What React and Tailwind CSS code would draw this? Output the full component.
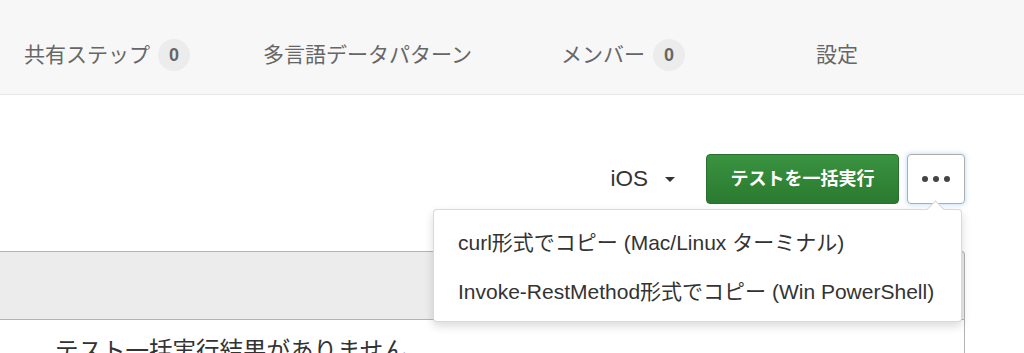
import React from "react";

function Badge({ n }) {
  return (
    <span className="ml-[8px] inline-flex h-[32px] w-[32px] items-center justify-center rounded-full bg-[#ececec] text-[18px] font-bold text-[#666]">
      {n}
    </span>
  );
}

export default function App() {
  return (
    <div className="h-[353px] w-[1024px] overflow-hidden bg-white font-['Liberation_Sans','Noto_Sans_CJK_JP',sans-serif]">
      <nav className="flex h-[95px] border-b border-[#e8e8e8] bg-[#f7f7f7] pl-[24px] pt-[39px] text-[21px] text-[#666]">
        <div className="flex h-[32px] w-[239px] items-center">
          共有ステップ
          <Badge n="0" />
        </div>
        <div className="flex h-[32px] w-[298px] items-center">多言語データパターン</div>
        <div className="flex h-[32px] w-[255px] items-center">
          メンバー
          <Badge n="0" />
        </div>
        <div className="flex h-[32px] items-center">設定</div>
      </nav>

      <div className="pr-[59px]">
        <div className="flex h-[109px] items-end justify-end">
          <div className="flex h-[50px] items-center">
            <div className="flex items-center text-[22.5px] text-[#333]">
              iOS
              <span className="ml-[17px] h-0 w-0 border-l-[5px] border-r-[5px] border-t-[5px] border-l-transparent border-r-transparent border-t-[#333]" />
            </div>
            <button className="ml-[31px] flex h-[50px] w-[193px] items-center justify-center rounded-[4px] border border-[#2a6f2d] bg-gradient-to-b from-[#3a9340] to-[#2a7a2f] text-[18px] font-bold text-white">
              テストを一括実行
            </button>
            <div className="relative ml-[8px]">
              <button className="flex h-[50px] w-[58px] items-center justify-center gap-[5px] rounded-[4px] border border-[#adadad] bg-white shadow-[0_0_4px_1px_rgba(102,175,233,0.35)]">
                <span className="h-[6px] w-[6px] rounded-full bg-[#444]" />
                <span className="h-[6px] w-[6px] rounded-full bg-[#444]" />
                <span className="h-[6px] w-[6px] rounded-full bg-[#444]" />
              </button>
              <div className="absolute right-[3px] top-[55px] z-10 w-[529px] rounded-[4px] border border-[rgba(0,0,0,0.15)] bg-white pb-[5px] pt-[8px] text-[21px] text-[#333] shadow-[0_4px_10px_rgba(0,0,0,0.15)]">
                <span className="absolute -top-[7px] right-[19px] h-[13px] w-[13px] rotate-45 border-l border-t border-[rgba(0,0,0,0.15)] bg-white" />
                <div className="flex h-[49px] items-center pl-[24px]">
                  curl形式でコピー (Mac/Linux ターミナル)
                </div>
                <div className="flex h-[49px] items-center pl-[24px]">
                  Invoke-RestMethod形式でコピー (Win PowerShell)
                </div>
              </div>
            </div>
          </div>
        </div>

        <div className="mt-[47px] h-[69px] rounded-tr-[4px] border-b border-r border-t border-[#b3b3b3] bg-[#ececec]" />
        <div className="h-[40px] border-r border-[#b3b3b3] pl-[55px] pt-[20px] text-[23.5px] leading-none text-[#333]">
          テスト一括実行結果がありません
        </div>
      </div>
    </div>
  );
}
